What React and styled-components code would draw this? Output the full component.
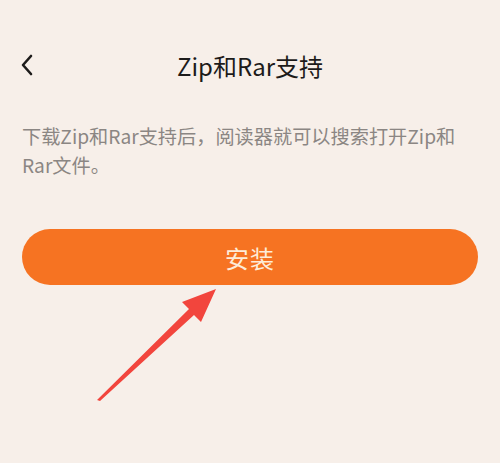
import React from 'react';
import styled, { createGlobalStyle } from 'styled-components';

const GlobalStyle = createGlobalStyle`
  html, body {
    margin: 0;
    padding: 0;
    background: #f7efe9;
  }
  body {
    font-family: "Noto Sans CJK SC", "Noto Sans", sans-serif;
  }
`;

const Page = styled.div`
  position: relative;
  width: 500px;
  height: 463px;
  overflow: hidden;
  background: #f7efe9;
`;

const Header = styled.div`
  display: flex;
  align-items: center;
  justify-content: center;
  position: relative;
  height: 50px;
  margin-top: 40px;
  padding: 0 22px;
`;

const BackButton = styled.button`
  position: absolute;
  left: 16px;
  top: 50%;
  transform: translateY(-50%);
  display: flex;
  padding: 4px;
  border: none;
  background: none;
  cursor: pointer;
`;

const Title = styled.h1`
  margin: 0;
  font-size: 24px;
  font-weight: 400;
  color: #1d1b1a;
`;

const Description = styled.p`
  margin: 32px 0 0;
  padding: 0 22px;
  font-size: 19.2px;
  line-height: 29px;
  color: #8b8683;
`;

const InstallButton = styled.button`
  display: flex;
  align-items: center;
  justify-content: center;
  width: calc(100% - 44px);
  height: 56px;
  margin: 49px 22px 0;
  border: none;
  border-radius: 28px;
  background: #f67322;
  color: #fdecd9;
  font-family: inherit;
  font-size: 24px;
  font-weight: 400;
  letter-spacing: 1px;
`;

const Arrow = styled.svg`
  position: absolute;
  left: 0;
  top: 0;
  pointer-events: none;
`;

export default function App() {
  return (
    <Page>
      <GlobalStyle />
      <Header>
        <BackButton aria-label="返回">
          <svg width="14" height="22" viewBox="0 0 14 22">
            <path d="M11 2 L3 11 L11 20" fill="none" stroke="#1d1b1a" strokeWidth="2.6" strokeLinecap="round" strokeLinejoin="round" />
          </svg>
        </BackButton>
        <Title>Zip和Rar支持</Title>
      </Header>
      <Description>下载Zip和Rar支持后，阅读器就可以搜索打开Zip和Rar文件。</Description>
      <InstallButton>安装</InstallButton>
      <Arrow width="500" height="463" viewBox="0 0 500 463">
        <polygon points="97,400 189,309 182,302 216,289 201,322 194,315 100,401" fill="#f2453d" />
      </Arrow>
    </Page>
  );
}
